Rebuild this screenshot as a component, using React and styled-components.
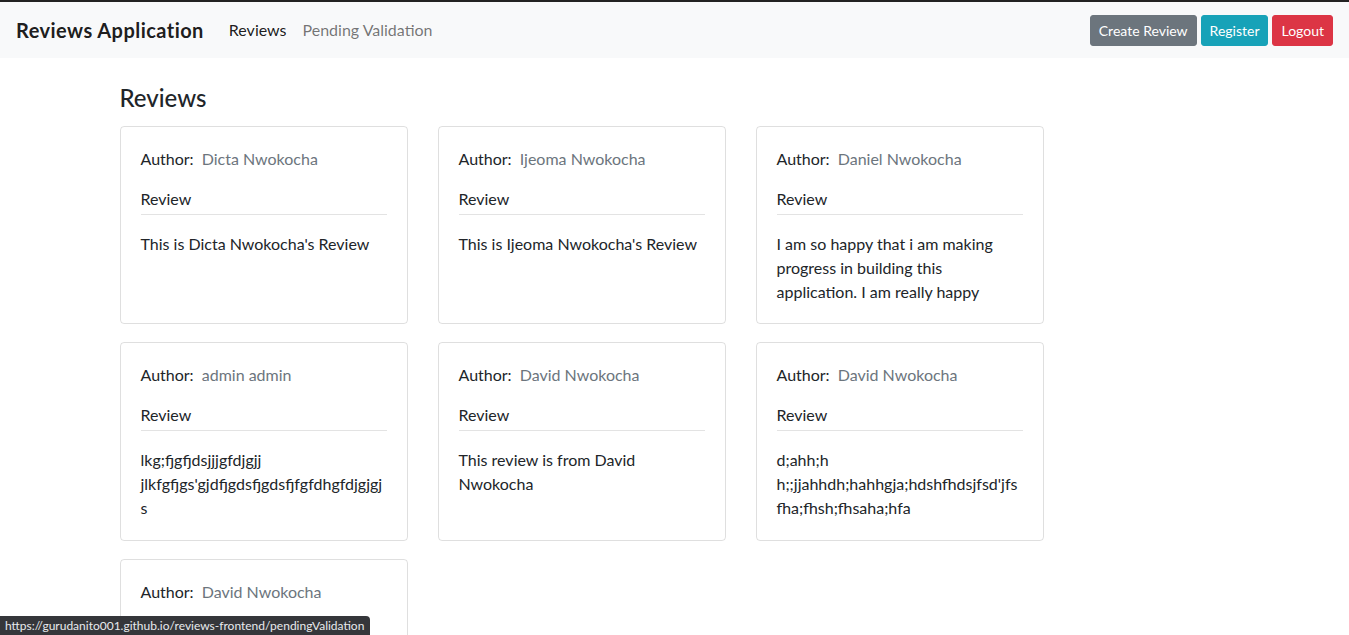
import React from 'react';
import styled, { createGlobalStyle } from 'styled-components';

const GlobalStyle = createGlobalStyle`
  * { box-sizing: border-box; }
  body {
    margin: 0;
    background: #fff;
    color: #212529;
    font-family: "Segoe UI", Lato, "Noto Sans", sans-serif;
    font-size: 16px;
    line-height: 1.5;
  }
`;

const Navbar = styled.nav`
  display: flex;
  align-items: center;
  justify-content: space-between;
  height: 58px;
  padding: 0 16px;
  background: #f8f9fa;
  border-top: 2px solid #222;
`;

const Left = styled.div`
  display: flex;
  align-items: center;
`;

const Brand = styled.a`
  font-size: 20px;
  font-weight: 700;
  letter-spacing: 0.45px;
  color: rgba(0, 0, 0, 0.9);
  margin-right: 17px;
  text-decoration: none;
`;

const NavLink = styled.a`
  padding: 8px;
  color: ${({ $active }) => ($active ? 'rgba(0,0,0,.9)' : 'rgba(0,0,0,.55)')};
  text-decoration: none;
`;

const Actions = styled.div`
  display: flex;
  gap: 4px;
`;

const Button = styled.button`
  font-family: inherit;
  font-size: 14px;
  line-height: 1.5;
  padding: 4px 8px;
  height: 31px;
  border: 1px solid ${({ $bg }) => $bg};
  border-radius: 3px;
  background: ${({ $bg }) => $bg};
  color: #fff;
  cursor: pointer;
`;

const Container = styled.main`
  max-width: 1140px;
  margin: 0 auto;
  padding: 26px 15px 0;
`;

const Heading = styled.h4`
  margin: 0 0 13px;
  font-size: 24px;
  font-weight: 500;
  line-height: 1.2;
`;

const Grid = styled.div`
  display: grid;
  grid-template-columns: repeat(3, 288px);
  column-gap: 30px;
  row-gap: 18px;
`;

const Card = styled.div`
  border: 1px solid rgba(0, 0, 0, 0.125);
  border-radius: 4px;
  padding: 20px 20px 19.5px;
`;

const AuthorRow = styled.div`
  margin-bottom: 16px;
`;

const AuthorName = styled.span`
  color: #6c757d;
  margin-left: 4px;
`;

const ReviewLabel = styled.div`
  padding-bottom: 3px;
  border-bottom: 1px solid #e3e3e3;
  margin-bottom: 17px;
`;

const ReviewText = styled.p`
  margin: 0;
  overflow-wrap: break-word;
`;

const StatusBar = styled.div`
  position: fixed;
  left: 0;
  bottom: 0;
  padding: 2px 6px 1px 5px;
  background: #35363a;
  color: #e8eaed;
  font-size: 12px;
  line-height: 16px;
  border-top-right-radius: 4px;
`;

const reviews = [
  { author: 'Dicta Nwokocha', text: "This is Dicta Nwokocha's Review" },
  { author: 'Ijeoma Nwokocha', text: "This is Ijeoma Nwokocha's Review" },
  { author: 'Daniel Nwokocha', text: 'I am so happy that i am making progress in building this application. I am really happy' },
  { author: 'admin admin', text: "lkg;fjgfjdsjjjgfdjgjj jlkfgfjgs'gjdfjgdsfjgdsfjfgfdhgfdjgjgjs" },
  { author: 'David Nwokocha', text: 'This review is from David Nwokocha' },
  { author: 'David Nwokocha', text: "d;ahh;h h;;jjahhdh;hahhgja;hdshfhdsjfsd'jfsfha;fhsh;fhsaha;hfa" },
  { author: 'David Nwokocha', text: 'Hello' },
];

export default function App() {
  return (
    <>
      <GlobalStyle />
      <Navbar>
        <Left>
          <Brand href="#">Reviews Application</Brand>
          <NavLink href="#" $active>Reviews</NavLink>
          <NavLink href="#">Pending Validation</NavLink>
        </Left>
        <Actions>
          <Button $bg="#6c757d">Create Review</Button>
          <Button $bg="#17a2b8">Register</Button>
          <Button $bg="#dc3545">Logout</Button>
        </Actions>
      </Navbar>
      <Container>
        <Heading>Reviews</Heading>
        <Grid>
          {reviews.map((r, i) => (
            <Card key={i}>
              <AuthorRow>
                Author: <AuthorName>{r.author}</AuthorName>
              </AuthorRow>
              <ReviewLabel>Review</ReviewLabel>
              <ReviewText>{r.text}</ReviewText>
            </Card>
          ))}
        </Grid>
      </Container>
      <StatusBar>https://gurudanito001.github.io/reviews-frontend/pendingValidation</StatusBar>
    </>
  );
}
